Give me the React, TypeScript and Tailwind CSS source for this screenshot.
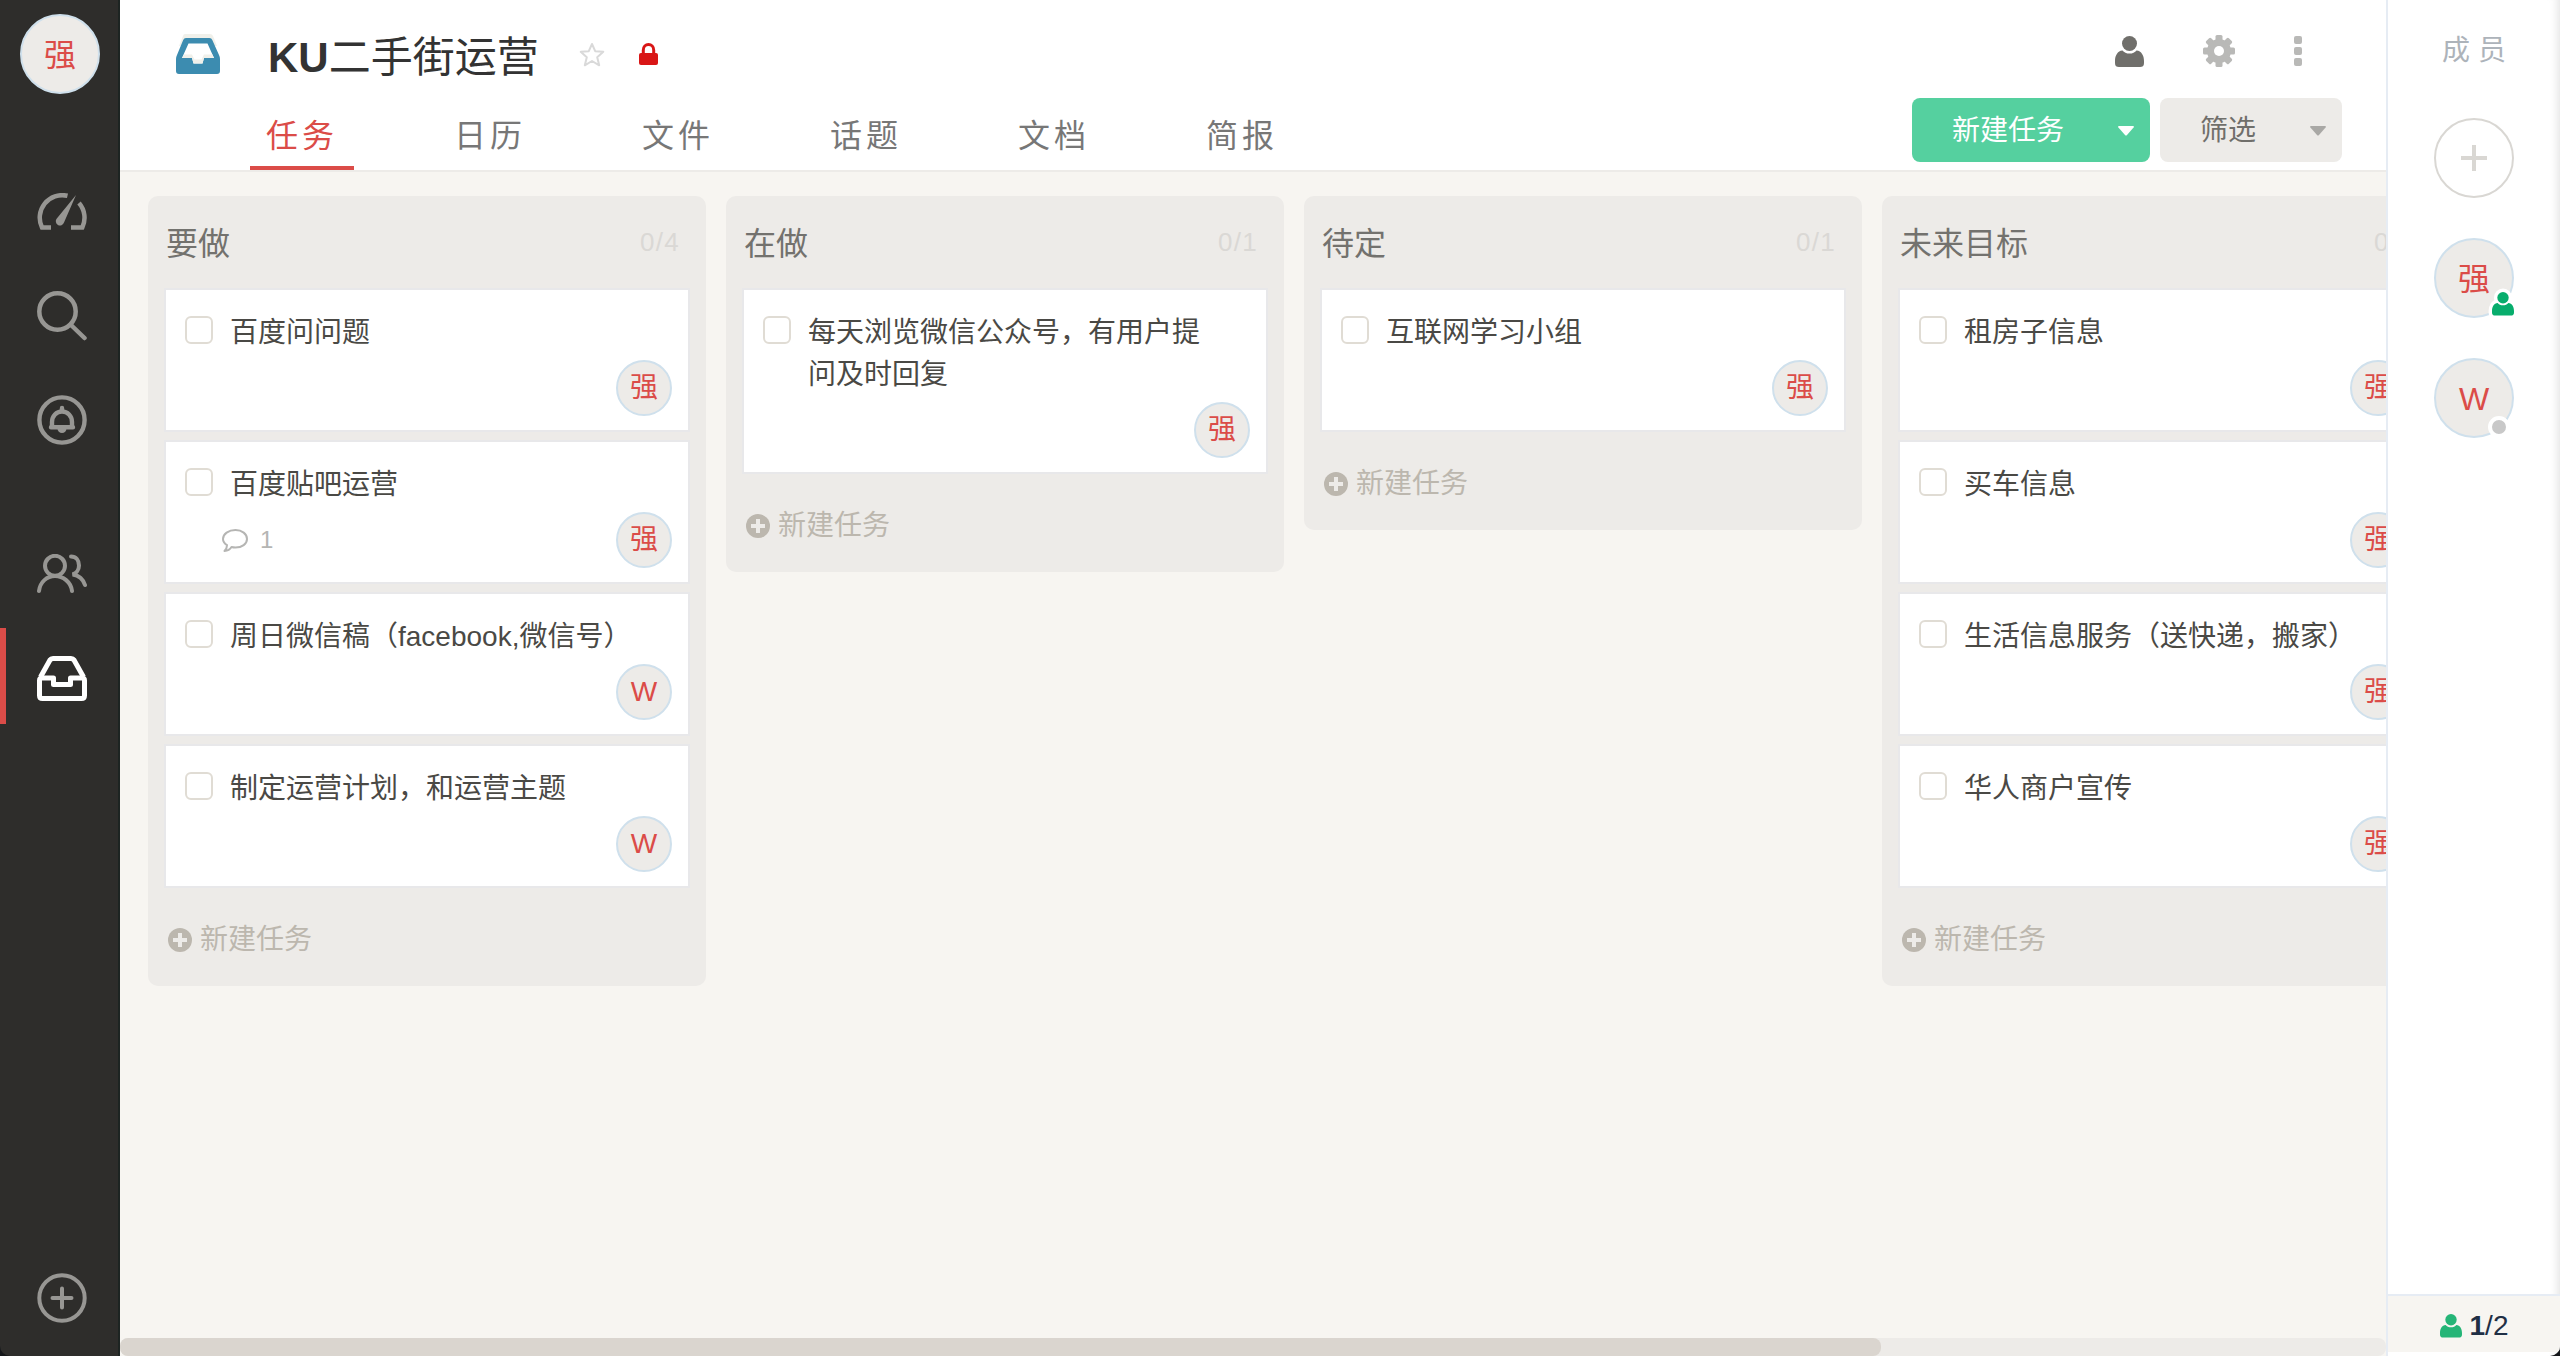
import React from 'react';

type Task = { title: string; who: string; comments?: number };
type Column = { title: string; count: string; tasks: Task[] };

const columns: Column[] = [
  {
    title: '要做',
    count: '0/4',
    tasks: [
      { title: '百度问问题', who: '强' },
      { title: '百度贴吧运营', who: '强', comments: 1 },
      { title: '周日微信稿（facebook,微信号）', who: 'W' },
      { title: '制定运营计划，和运营主题', who: 'W' },
    ],
  },
  {
    title: '在做',
    count: '0/1',
    tasks: [{ title: '每天浏览微信公众号，有用户提问及时回复', who: '强' }],
  },
  {
    title: '待定',
    count: '0/1',
    tasks: [{ title: '互联网学习小组', who: '强' }],
  },
  {
    title: '未来目标',
    count: '0/4',
    tasks: [
      { title: '租房子信息', who: '强' },
      { title: '买车信息', who: '强' },
      { title: '生活信息服务（送快递，搬家）', who: '强' },
      { title: '华人商户宣传', who: '强' },
    ],
  },
];

const tabs = ['任务', '日历', '文件', '话题', '文档', '简报'];

function PersonIcon({ className, outlined = false }: { className: string; outlined?: boolean }) {
  const d =
    'M7.5 14.5C9 16.6 11.5 17.6 14.5 17.6S20 16.6 21.5 14.5C26.5 15 29 19.5 29 25V27C29 30 27.5 31 25 31H4C1.5 31 0 30 0 27V25C0 19.5 2.5 15 7.5 14.5Z';
  return (
    <svg viewBox="0 0 29 31" className={className} fill="currentColor" overflow="visible" aria-hidden="true">
      {outlined && (
        <g stroke="#fff" strokeWidth="9" strokeLinejoin="round">
          <circle cx="14.5" cy="7.5" r="7.5" />
          <path d={d} />
        </g>
      )}
      <circle cx="14.5" cy="7.5" r="7.5" />
      <path d={d} />
    </svg>
  );
}

function GaugeIcon() {
  return (
    <svg viewBox="0 0 50 38" className="w-[50px]" fill="none" stroke="currentColor" strokeWidth="4.5" aria-hidden="true">
      <path d="M14 34.5H5A22.5 22.5 0 0 1 30.5 2.8" />
      <path d="M42 10A22.5 22.5 0 0 1 45.3 34.5H34" />
      <path d="M39 2L27 29.500A4.2 4.2 0 1 1 19.8 25.5Z" fill="currentColor" stroke="none" />
    </svg>
  );
}

function SearchIcon() {
  return (
    <svg viewBox="0 0 50 50" className="w-[50px]" fill="none" stroke="currentColor" strokeWidth="4.5" strokeLinecap="round" aria-hidden="true">
      <circle cx="20.5" cy="20.5" r="18.2" />
      <path d="M34 34L47.5 47" />
    </svg>
  );
}

function BellIcon() {
  return (
    <svg viewBox="0 0 50 50" className="w-[50px]" fill="none" stroke="currentColor" strokeWidth="4.4" strokeLinecap="round" aria-hidden="true">
      <circle cx="25" cy="25" r="22.6" />
      <path d="M15 31V27A10 10.5 0 0 1 35 27V31M25 13V16M14 32.2H36" />
      <path d="M20.5 33.5H29.5A4.5 4.5 0 0 1 20.5 33.5Z" fill="currentColor" stroke="none" />
    </svg>
  );
}

function PeopleIcon() {
  return (
    <svg viewBox="0 0 50 40" className="w-[50px]" fill="none" stroke="currentColor" strokeWidth="4" strokeLinecap="round" aria-hidden="true">
      <circle cx="18" cy="11.8" r="10" />
      <path d="M2 37C3 28 10 22 18 22S34 28 35 37" />
      <path d="M34 2.5C39 2.5 42 6.5 42 11.5C42 16 39 19.5 35.5 20.5C42 21 46.5 26 48 31" />
    </svg>
  );
}

function TrayIcon() {
  return (
    <svg viewBox="0 0 50 45" className="w-[50px]" fill="none" stroke="currentColor" strokeWidth="5" strokeLinejoin="round" aria-hidden="true">
      <path d="M3.5 21L13 4Q14 2.5 16 2.5H34Q36 2.5 37 4L46.5 21" />
      <path d="M5 22H16.5V28.5H33.5V22H45Q47.5 22 47.5 24.5V39.5Q47.5 42.5 44.5 42.5H5.5Q2.5 42.5 2.5 39.5V24.5Q2.5 22 5 22Z" />
    </svg>
  );
}

function PlusCircleIcon() {
  return (
    <svg viewBox="0 0 50 50" className="w-[50px]" fill="none" stroke="currentColor" strokeWidth="4" strokeLinecap="round" aria-hidden="true">
      <circle cx="25" cy="25" r="22.7" />
      <path d="M25 15.5V34.5M15.5 25H34.5" />
    </svg>
  );
}

function ProjectIcon() {
  return (
    <svg viewBox="0 0 44 40" className="h-10 w-11 shrink-0" aria-hidden="true">
      <path d="M9 0H34Q36 0 37 2L41 12H3L7 2Q7.5 0 9 0Z" fill="#f0f0ea" />
      <path
        d="M10 4H33.5Q35.5 4 36.3 6L43 21Q44 23 44 25V37Q44 40 41 40H3Q0 40 0 37V25Q0 23 1 21L7.2 6Q8 4 10 4Z"
        fill="#3c8cb0"
      />
      <path d="M12.500 9.500H31.5L38 24H28L26.5 29.500H17.5L16 24H6Z" fill="#fff" />
      <path d="M8 20.5H16L18.5 25.5H25.5L28 20.5H36.400L38 24H28L26.5 29.500H17.5L16 24H6Z" fill="#f0f0ea" />
    </svg>
  );
}

function StarIcon() {
  return (
    <svg viewBox="0 0 26 25" className="w-[26px]" fill="none" stroke="#d9d9d9" strokeWidth="2" strokeLinejoin="round" aria-hidden="true">
      <path d="M13 2L16.2 9.2L24.3 9.8L18.2 15.2L20.2 23.3L13 19L5.8 23.3L7.8 15.2L1.7 9.8L9.8 9.2Z" />
    </svg>
  );
}

function LockIcon() {
  return (
    <svg viewBox="0 0 19 22" className="w-[19px]" fill="#d91616" role="img" aria-label="私有">
      <rect y="10" width="19" height="12" rx="2" />
      <path d="M4.3 11V7A5.2 5.5 0 0 1 14.7 7V11" fill="none" stroke="#d91616" strokeWidth="3" />
    </svg>
  );
}

function GearIcon() {
  return (
    <svg viewBox="0 0 32 32" className="w-8" fill="#b9b9b7" aria-hidden="true">
      {[0, 45, 90, 135].map((a) => (
        <rect key={a} x="12.5" y="0" width="7" height="32" rx="1.5" transform={`rotate(${a} 16 16)`} />
      ))}
      <circle cx="16" cy="16" r="12" />
      <circle cx="16" cy="16" r="5" fill="#fff" />
    </svg>
  );
}

function MoreIcon() {
  return (
    <svg viewBox="0 0 8 30" className="w-2" fill="#b9b9b7" aria-hidden="true">
      <rect width="8" height="8" rx="2" />
      <rect y="11" width="8" height="8" rx="2" />
      <rect y="22" width="8" height="8" rx="2" />
    </svg>
  );
}

function Caret({ className }: { className: string }) {
  return (
    <svg viewBox="0 0 16 10" className={className} fill="currentColor" aria-hidden="true">
      <path d="M1 0H15Q16.5 .3 15.6 1.5L9 9Q8 10 7 9L.4 1.5Q-.5 .3 1 0Z" />
    </svg>
  );
}

function AddIcon() {
  return (
    <svg viewBox="0 0 24 24" className="w-6" aria-hidden="true">
      <circle cx="12" cy="12" r="12" fill="#bcb7ae" />
      <path d="M12 5V19M5 12H19" stroke="#edebe8" strokeWidth="4" />
    </svg>
  );
}

function CommentIcon() {
  return (
    <svg viewBox="0 0 26 23" className="w-[26px]" fill="none" stroke="currentColor" strokeWidth="2" strokeLinejoin="round" aria-hidden="true">
      <path d="M13.5 1C20 1 25 5 25 10S20 18.5 13.5 18.5C12 18.5 11 18.4 9.5 18C8 20.5 5.5 21.8 2.5 22C4 20.5 5 18.5 5 16.2C2.5 14.5 1 12.5 1 10C1 5 6.5 1 13.5 1Z" />
    </svg>
  );
}

function NavItem({ label, active = false, children }: { label: string; active?: boolean; children: React.ReactNode }) {
  return (
    <a
      href="#"
      aria-label={label}
      className={
        active
          ? 'flex h-24 items-center justify-center border-l-[6px] border-[#db4c48] pt-1 text-white'
          : 'flex h-24 items-center justify-center border-l-[6px] border-transparent text-[#979693]'
      }
    >
      {children}
    </a>
  );
}

function Sidebar() {
  return (
    <nav className="flex w-[120px] shrink-0 flex-col border-r-2 border-[#1d2422] bg-[#2e2d2b] pb-2.5">
      <button
        type="button"
        className="mt-3.5 ml-5 flex size-20 items-center justify-center rounded-full border-2 border-[#cfe0ec] bg-[#edebe8] pt-0.5 text-[32px] text-[#db4c48]"
      >
        强
      </button>
      <div className="mt-[70px] flex flex-col gap-2">
        <NavItem label="工作台">
          <GaugeIcon />
        </NavItem>
        <NavItem label="搜索">
          <SearchIcon />
        </NavItem>
        <NavItem label="通知">
          <BellIcon />
        </NavItem>
      </div>
      <div className="mt-[58px] flex flex-col gap-1.5">
        <NavItem label="团队">
          <PeopleIcon />
        </NavItem>
        <NavItem label="项目" active>
          <TrayIcon />
        </NavItem>
      </div>
      <div className="mt-auto">
        <NavItem label="新建">
          <PlusCircleIcon />
        </NavItem>
      </div>
    </nav>
  );
}

function Header() {
  return (
    <header className="flex items-start justify-between border-b-2 border-[#edebe8] bg-white pr-11">
      <div className="flex flex-col pt-[22px]">
        <div className="flex h-16 items-center pl-14">
          <ProjectIcon />
          <h1 className="ml-12 pt-2 text-[42px] leading-none whitespace-nowrap text-[#333]">
            <span className="font-bold">KU</span>二手街运营
          </h1>
          <button type="button" aria-label="收藏" className="ml-10">
            <StarIcon />
          </button>
          <span className="ml-[34px]">
            <LockIcon />
          </span>
        </div>
        <nav className="mt-5 flex gap-[84px] pl-[130px]">
          {tabs.map((t, i) => (
            <a
              key={t}
              href="#"
              className={
                i === 0
                  ? 'flex h-16 items-center border-b-4 border-[#db4c48] px-4 text-[32px] tracking-[4px] whitespace-nowrap text-[#db4c48]'
                  : 'flex h-16 items-center border-b-4 border-transparent px-4 text-[32px] tracking-[4px] whitespace-nowrap text-[#777]'
              }
            >
              {t}
            </a>
          ))}
        </nav>
      </div>
      <div className="flex flex-col items-end pt-[35px]">
        <div className="flex h-8 items-center gap-[59px] pr-10">
          <button type="button" aria-label="成员" className="text-[#706f6b]">
            <PersonIcon className="w-[29px]" />
          </button>
          <button type="button" aria-label="设置">
            <GearIcon />
          </button>
          <button type="button" aria-label="更多">
            <MoreIcon />
          </button>
        </div>
        <div className="mt-[31px] flex gap-2.5 text-[28px] whitespace-nowrap">
          <div className="flex h-16 w-[238px] items-center justify-between rounded-lg bg-[#55d09f] pt-0.5 pr-4 pl-10 text-white">
            <button type="button">新建任务</button>
            <button type="button" aria-label="更多新建选项">
              <Caret className="w-4" />
            </button>
          </div>
          <button
            type="button"
            aria-haspopup="menu"
            className="flex h-16 w-[182px] items-center justify-between rounded-lg bg-[#edebe8] pt-0.5 pr-4 pl-10 text-[#706f6b]"
          >
            筛选
            <Caret className="w-4 text-[#a9a8a5]" />
          </button>
        </div>
      </div>
    </header>
  );
}

function TaskCard({ task, id }: { task: Task; id: string }) {
  return (
    <li className="border-2 border-[#e8e8ea] bg-white pt-5 pr-4 pb-3.5 pl-[19px]">
      <div className="flex items-start">
        <input
          type="checkbox"
          id={id}
          className="mt-1.5 size-7 shrink-0 appearance-none rounded-md border-2 border-[#e0dcd4] bg-white checked:bg-[#e0dcd4]"
        />
        <label htmlFor={id} className="mr-7 ml-[17px] pt-0.5 text-[28px] leading-[42px] text-[#4a4945]">
          {task.title}
        </label>
      </div>
      <div className="mt-1.5 flex h-14 items-center justify-between pl-[37px]">
        <span className="flex items-center gap-3 text-2xl text-[#b5b5b3]">
          {task.comments && (
            <>
              <CommentIcon />
              {task.comments}
            </>
          )}
        </span>
        <span className="flex size-14 items-center justify-center rounded-full border-2 border-[#cfe0ec] bg-[#edebe8] text-[28px] text-[#db4c48]">
          {task.who}
        </span>
      </div>
    </li>
  );
}

function BoardColumn({ column, index }: { column: Column; index: number }) {
  return (
    <section className="w-[558px] shrink-0 rounded-[10px] bg-[#edebe8] px-4">
      <div className="flex h-[92px] items-center justify-between pr-2.5 pl-0.5">
        <h2 className="pt-1 text-[32px] text-[#73726e]">{column.title}</h2>
        <span className="text-[26px] tracking-wider text-[#dad8d5]">{column.count}</span>
      </div>
      <ul className="flex flex-col gap-2">
        {column.tasks.map((t, i) => (
          <TaskCard key={t.title} task={t} id={`task-${index}-${i}`} />
        ))}
      </ul>
      <button type="button" className="mt-[31px] mb-[25px] flex h-[42px] items-center gap-2 pl-1 text-[28px] whitespace-nowrap text-[#bcb7ae]">
        <AddIcon />
        新建任务
      </button>
    </section>
  );
}

function MemberPanel() {
  return (
    <aside className="flex w-[174px] shrink-0 flex-col border-l-2 border-[#e6ecf4] bg-white shadow-[inset_-10px_0_10px_-8px_rgba(0,0,0,0.12)]">
      <h2 className="mt-[30px] text-center text-[28px] leading-[42px] text-[#adb3ba]">成 员</h2>
      <div className="mt-[46px] flex flex-col items-center gap-10">
        <button
          type="button"
          aria-label="添加成员"
          className="flex size-20 items-center justify-center rounded-full border-2 border-[#d9d7d3] bg-white text-[#d9d7d3]"
        >
          <svg viewBox="0 0 26 26" className="w-[26px]" stroke="currentColor" strokeWidth="4" aria-hidden="true">
            <path d="M13 0V26M0 13H26" />
          </svg>
        </button>
        <div className="relative flex size-20 items-center justify-center rounded-full border-2 border-[#cfe0ec] bg-[#edebe8] pt-0.5 text-[32px] text-[#db4c48]">
          强
          <span className="absolute -right-0.5 bottom-0 text-[#07ad6c]">
            <PersonIcon className="w-[22px]" outlined />
          </span>
        </div>
        <div className="relative flex size-20 items-center justify-center rounded-full border-2 border-[#cfe0ec] bg-[#edebe8] pt-0.5 text-[32px] text-[#db4c48]">
          W
          <span className="absolute right-0.5 -bottom-0.5 size-[22px] rounded-full border-4 border-white bg-[#c8c8c8]" />
        </div>
      </div>
      <div className="mt-auto mb-1 flex h-[58px] items-center justify-center gap-2 border-t-2 border-[#e6ecf4] bg-[#f7f5f1] pt-1 text-[28px] text-[#1f2f45]">
        <span className="text-[#25b577]">
          <PersonIcon className="w-[22px]" />
        </span>
        <span>
          <span className="font-bold">1</span>/2
        </span>
      </div>
    </aside>
  );
}

export default function App() {
  return (
    <div className="h-screen bg-[#15171a] font-['Liberation_Sans','Noto_Sans_CJK_SC',sans-serif]">
      <div lang="zh-CN" className="flex h-full overflow-hidden rounded-b-[10px]">
        <Sidebar />
        <div className="flex min-w-0 flex-1 flex-col bg-[#f7f5f1]">
          <Header />
          <main className="flex flex-1 items-start gap-5 overflow-hidden pt-6 pl-7">
            {columns.map((c, i) => (
              <BoardColumn key={c.title} column={c} index={i} />
            ))}
          </main>
          <div className="h-[18px] rounded-lg bg-[#edebe8]">
            <div className="h-full w-[77.7%] rounded-lg bg-[#dad5cf]" />
          </div>
        </div>
        <MemberPanel />
      </div>
    </div>
  );
}
